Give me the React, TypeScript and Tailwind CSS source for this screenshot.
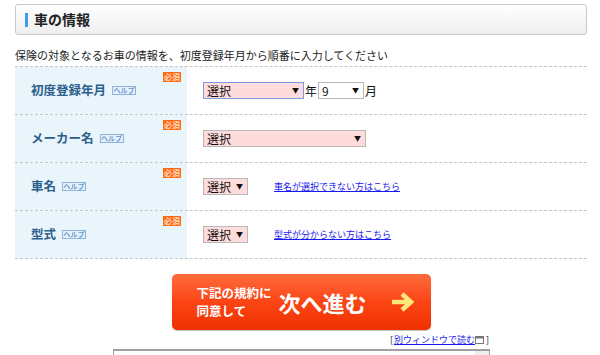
import React from "react";

const font = { fontFamily: '"Noto Sans CJK JP", "Noto Sans", sans-serif' };

function Help() {
  return (
    <span className="ml-[6px] inline-flex h-[9px] w-[24px] items-center justify-center border border-[#8fb3d9] bg-[#e3f0fc] text-[7px] leading-none text-[#2f6fb8]">
      ヘルプ
    </span>
  );
}

function Req() {
  return (
    <span className="absolute right-[6px] top-[5px] flex h-[10px] w-[18px] items-center justify-center bg-[#ff6a0f] text-[8px] leading-none text-white">
      必須
    </span>
  );
}

function Sel({ w, pink = true, focus = false, text = "選択" }: { w: number; pink?: boolean; focus?: boolean; text?: string }) {
  return (
    <div
      className={`flex h-[17px] items-center justify-between pl-[3px] pr-[4px] text-[12px] leading-none text-[#111] ${pink ? "bg-[#ffdcdc]" : "bg-white"} ${focus ? "border border-[#7b9be0]" : "border border-[#b8b8b8]"}`}
      style={{ width: w }}
    >
      <span>{text}</span>
      <span className="text-[7px]">▼</span>
    </div>
  );
}

function Row({ label, children }: { label: string; children: React.ReactNode }) {
  return (
    <div className="flex h-[48px] border-b border-dashed border-[#c4c4c4]">
      <div className="relative flex w-[172px] items-center bg-[#eaf4fb] pl-[16px]">
        <Req />
        <span className="text-[12.5px] font-semibold text-[#2b5f8c]">{label}</span>
        <Help />
      </div>
      <div className="flex flex-1 items-center pl-[16px]">{children}</div>
    </div>
  );
}

export default function App() {
  return (
    <div className="h-[355px] w-[600px] overflow-hidden bg-white" style={font}>
      <div className="ml-[15px] w-[572px] pt-[4px]">
        <div className="flex h-[31px] items-center rounded-[3px] border border-[#c8c8c8] bg-gradient-to-b from-white to-[#eeeeee] pl-[9px]">
          <span className="h-[14px] w-[3px] bg-[#3aa0e6]" />
          <span className="ml-[6px] text-[14px] font-bold text-[#222]">車の情報</span>
        </div>
        <div className="mt-[9px] h-[23px] border-b border-dashed border-[#c4c4c4] text-[11px] leading-[23px] text-[#222]">
          保険の対象となるお車の情報を、初度登録年月から順番に入力してください
        </div>
        <Row label="初度登録年月">
          <Sel w={101} focus />
          <span className="mx-[1px] text-[12px] text-[#111]">年</span>
          <Sel w={46} pink={false} text="9" />
          <span className="ml-[1px] text-[12px] text-[#111]">月</span>
        </Row>
        <Row label="メーカー名">
          <Sel w={163} />
        </Row>
        <Row label="車名">
          <Sel w={45} />
          <a className="ml-[26px] text-[9px] text-[#1a1aee] underline">車名が選択できない方はこちら</a>
        </Row>
        <Row label="型式">
          <Sel w={45} />
          <a className="ml-[26px] text-[9px] text-[#1a1aee] underline">型式が分からない方はこちら</a>
        </Row>
        <div className="flex flex-col items-center pt-[15px]">
          <div className="flex h-[56px] w-[259px] items-center rounded-[5px] bg-gradient-to-b from-[#ff6a3a] via-[#fb4414] to-[#f03000] pl-[25px] shadow-[0_1px_1px_rgba(0,0,0,0.25)]">
            <div className="flex flex-col text-[12.5px] font-bold leading-[18px] text-white">
              <span>下記の規約に</span>
              <span>同意して</span>
            </div>
            <div className="ml-[7px] text-[22px] font-bold text-white">次へ進む</div>
            <svg className="ml-[23px]" width="25" height="22" viewBox="0 0 25 22">
              <path d="M2 11 H20 M12 3 L21 11 L12 19" stroke="#ffe77a" strokeWidth="4.5" fill="none" strokeLinejoin="miter" />
            </svg>
          </div>
        </div>
        <div className="mt-[3px] flex items-center justify-end pr-[98px] text-[9px] leading-[13px] text-[#222]">
          <span className="mr-[1px]">[</span>
          <a className="text-[#1a1aee] underline">別ウィンドウで読む</a>
          <svg width="9" height="8" viewBox="0 0 9 8">
            <rect x="0.5" y="0.5" width="8" height="7" fill="none" stroke="#777" />
            <rect x="0.5" y="0.5" width="8" height="2" fill="#777" />
          </svg>
          <span className="ml-[2px]">]</span>
        </div>
      </div>
      <div className="ml-[113px] mt-[3px] flex h-[10px] w-[377px] border-l border-r border-t-2 border-[#a0a0a0]">
        <div className="flex-1" />
        <div className="w-[14px] bg-[#eeeeee]" />
      </div>
    </div>
  );
}
